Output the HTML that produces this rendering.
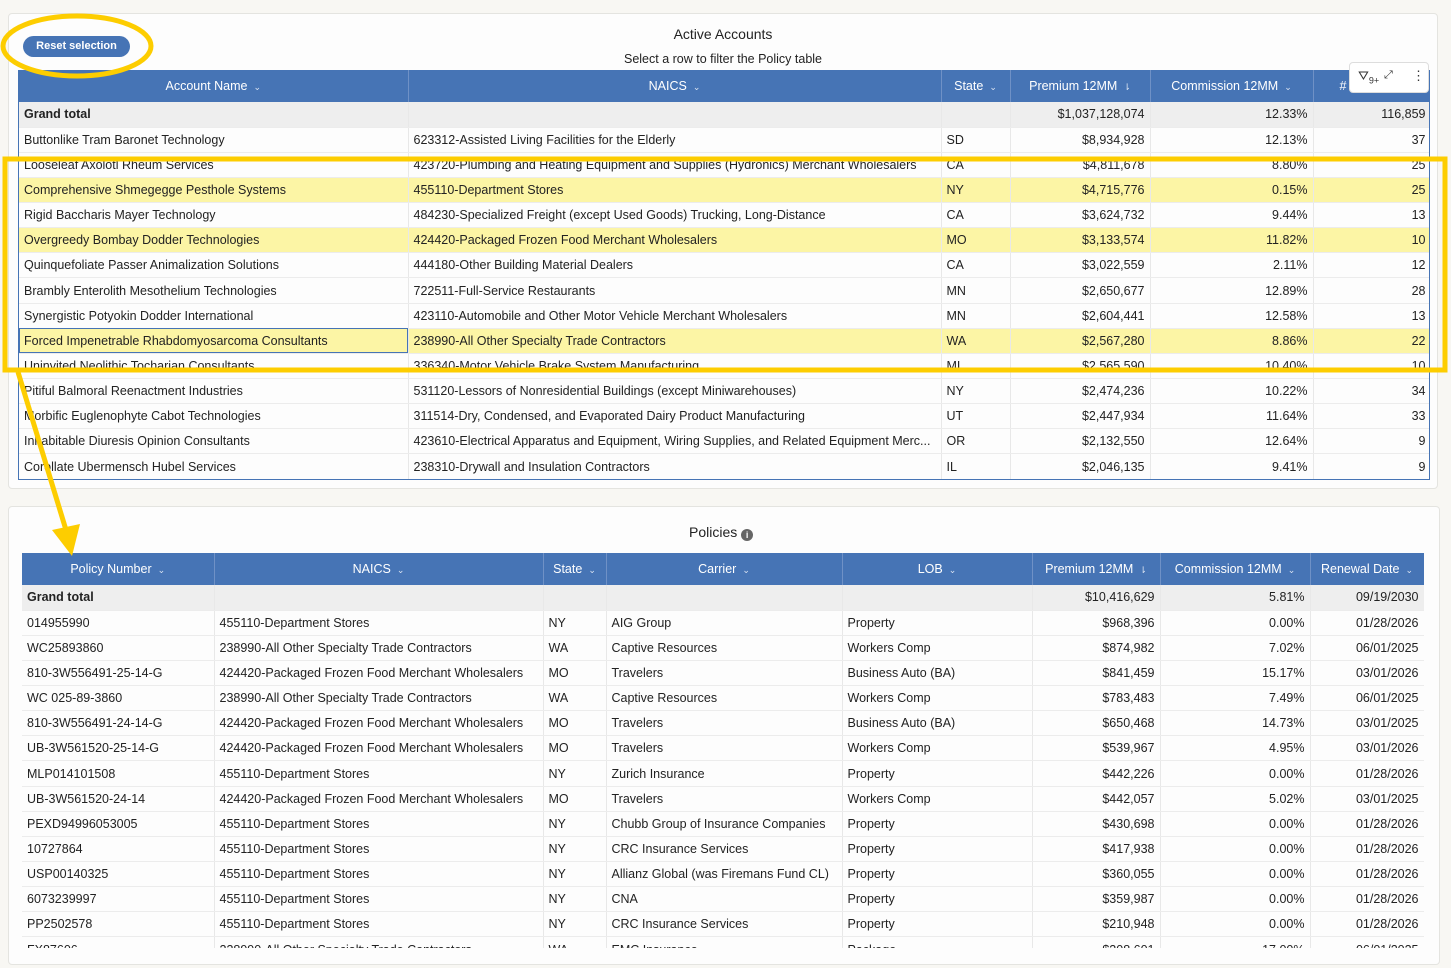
<!DOCTYPE html>
<html><head><meta charset="utf-8"><style>
*{box-sizing:border-box;margin:0;padding:0}
body{width:1451px;height:968px;background:#f8f7f3;font-family:"Liberation Sans",sans-serif;font-size:12.5px;color:#222;position:relative;overflow:hidden}
.card{position:absolute;background:#fdfdfd;border:1px solid #e4e4e0;border-radius:4px}
table{border-collapse:collapse;table-layout:fixed;position:absolute}
td{height:25.15px;padding:0 5px;white-space:nowrap;overflow:hidden;border-bottom:1px solid #ececec;border-right:1px solid #e8e8e8;line-height:24px}
th{height:32px;background:#4674b5;color:#fff;font-weight:normal;font-size:12.5px;border-right:1px solid #6f91c6;white-space:nowrap;overflow:hidden}
th .c{font-size:9px;color:#dde5f2;margin-left:6px}
.r{text-align:right}
tr.g td{background:#eeeeee;font-weight:bold}
tr.g td:not(:first-child){font-weight:normal}
tr.h td{background:#fcf5a5}
.wrap{position:absolute;overflow:hidden}
</style></head><body>
<div class="card" style="left:8px;top:13px;width:1430px;height:476px"></div>
<div style="position:absolute;left:23px;top:36px;width:107px;height:21px;background:#4674b5;border-radius:11px;color:#fff;font-size:11px;font-weight:bold;text-align:center;line-height:21px">Reset selection</div>
<div style="position:absolute;left:0;top:26px;width:1446px;text-align:center;font-size:14px;color:#222">Active Accounts</div>
<div style="position:absolute;left:0;top:52px;width:1446px;text-align:center;font-size:12.5px;color:#222">Select a row to filter the Policy table</div>
<div class="wrap" style="left:18px;top:70px;width:1412px;height:410px;border:1px solid #4674b5;border-top:none">
<table style="left:0;top:0;width:1412px">
<colgroup><col style="width:389px"><col style="width:533px"><col style="width:69px"><col style="width:140px"><col style="width:163px"><col style="width:118px"></colgroup>
<tr><th>Account Name<span class="c">⌄</span></th><th>NAICS<span class="c">⌄</span></th><th>State<span class="c">⌄</span></th><th>Premium 12MM<span class="c">⇂</span></th><th>Commission 12MM<span class="c">⌄</span></th><th style="text-align:left;padding-left:26px"># o</th></tr>
<tr class="g"><td>Grand total</td><td></td><td></td><td class="r">$1,037,128,074</td><td class="r">12.33%</td><td class="r">116,859</td></tr>
<tr><td>Buttonlike Tram Baronet Technology</td><td>623312-Assisted Living Facilities for the Elderly</td><td>SD</td><td class="r">$8,934,928</td><td class="r">12.13%</td><td class="r">37</td></tr>
<tr><td>Looseleaf Axolotl Rheum Services</td><td>423720-Plumbing and Heating Equipment and Supplies (Hydronics) Merchant Wholesalers</td><td>CA</td><td class="r">$4,811,678</td><td class="r">8.80%</td><td class="r">25</td></tr>
<tr class="h"><td>Comprehensive Shmegegge Pesthole Systems</td><td>455110-Department Stores</td><td>NY</td><td class="r">$4,715,776</td><td class="r">0.15%</td><td class="r">25</td></tr>
<tr><td>Rigid Baccharis Mayer Technology</td><td>484230-Specialized Freight (except Used Goods) Trucking, Long-Distance</td><td>CA</td><td class="r">$3,624,732</td><td class="r">9.44%</td><td class="r">13</td></tr>
<tr class="h"><td>Overgreedy Bombay Dodder Technologies</td><td>424420-Packaged Frozen Food Merchant Wholesalers</td><td>MO</td><td class="r">$3,133,574</td><td class="r">11.82%</td><td class="r">10</td></tr>
<tr><td>Quinquefoliate Passer Animalization Solutions</td><td>444180-Other Building Material Dealers</td><td>CA</td><td class="r">$3,022,559</td><td class="r">2.11%</td><td class="r">12</td></tr>
<tr><td>Brambly Enterolith Mesothelium Technologies</td><td>722511-Full-Service Restaurants</td><td>MN</td><td class="r">$2,650,677</td><td class="r">12.89%</td><td class="r">28</td></tr>
<tr><td>Synergistic Potyokin Dodder International</td><td>423110-Automobile and Other Motor Vehicle Merchant Wholesalers</td><td>MN</td><td class="r">$2,604,441</td><td class="r">12.58%</td><td class="r">13</td></tr>
<tr class="h"><td style="outline:1px solid #4674b5;outline-offset:-1px">Forced Impenetrable Rhabdomyosarcoma Consultants</td><td>238990-All Other Specialty Trade Contractors</td><td>WA</td><td class="r">$2,567,280</td><td class="r">8.86%</td><td class="r">22</td></tr>
<tr><td>Uninvited Neolithic Tocharian Consultants</td><td>336340-Motor Vehicle Brake System Manufacturing</td><td>MI</td><td class="r">$2,565,590</td><td class="r">10.40%</td><td class="r">10</td></tr>
<tr><td>Pitiful Balmoral Reenactment Industries</td><td>531120-Lessors of Nonresidential Buildings (except Miniwarehouses)</td><td>NY</td><td class="r">$2,474,236</td><td class="r">10.22%</td><td class="r">34</td></tr>
<tr><td>Morbific Euglenophyte Cabot Technologies</td><td>311514-Dry, Condensed, and Evaporated Dairy Product Manufacturing</td><td>UT</td><td class="r">$2,447,934</td><td class="r">11.64%</td><td class="r">33</td></tr>
<tr><td>Inhabitable Diuresis Opinion Consultants</td><td>423610-Electrical Apparatus and Equipment, Wiring Supplies, and Related Equipment Merc...</td><td>OR</td><td class="r">$2,132,550</td><td class="r">12.64%</td><td class="r">9</td></tr>
<tr><td>Corollate Ubermensch Hubel Services</td><td>238310-Drywall and Insulation Contractors</td><td>IL</td><td class="r">$2,046,135</td><td class="r">9.41%</td><td class="r">9</td></tr>
</table></div>
<div style="position:absolute;left:1349px;top:62px;width:80px;height:31px;background:#fff;border:1px solid #ddd;border-radius:4px;font-size:13px;color:#333">
<span style="position:absolute;left:8px;top:5px">⛛<sub style="font-size:9px">9+</sub></span><span style="position:absolute;left:34px;top:6px;font-size:11px">⤢</span><span style="position:absolute;left:62px;top:5px">⋮</span></div>

<div class="card" style="left:8px;top:506px;width:1432px;height:459px"></div>
<div style="position:absolute;left:689px;top:524px;font-size:14px">Policies <span style="display:inline-block;width:12px;height:12px;border-radius:6px;background:#666;color:#fff;font-size:9px;text-align:center;line-height:12px;font-weight:bold;vertical-align:-1px">i</span></div>
<div class="wrap" style="left:22px;top:553px;width:1402px;height:395px">
<table style="left:0;top:0;width:1402px">
<colgroup><col style="width:192px"><col style="width:329px"><col style="width:63px"><col style="width:236px"><col style="width:190px"><col style="width:128px"><col style="width:150px"><col style="width:114px"></colgroup>
<tr><th>Policy Number<span class="c">⌄</span></th><th>NAICS<span class="c">⌄</span></th><th>State<span class="c">⌄</span></th><th>Carrier<span class="c">⌄</span></th><th>LOB<span class="c">⌄</span></th><th>Premium 12MM<span class="c">⇂</span></th><th>Commission 12MM<span class="c">⌄</span></th><th>Renewal Date<span class="c">⌄</span></th></tr>
<tr class="g"><td>Grand total</td><td></td><td></td><td></td><td></td><td class="r">$10,416,629</td><td class="r">5.81%</td><td class="r">09/19/2030</td></tr>
<tr><td>014955990</td><td>455110-Department Stores</td><td>NY</td><td>AIG Group</td><td>Property</td><td class="r">$968,396</td><td class="r">0.00%</td><td class="r">01/28/2026</td></tr>
<tr><td>WC25893860</td><td>238990-All Other Specialty Trade Contractors</td><td>WA</td><td>Captive Resources</td><td>Workers Comp</td><td class="r">$874,982</td><td class="r">7.02%</td><td class="r">06/01/2025</td></tr>
<tr><td>810-3W556491-25-14-G</td><td>424420-Packaged Frozen Food Merchant Wholesalers</td><td>MO</td><td>Travelers</td><td>Business Auto (BA)</td><td class="r">$841,459</td><td class="r">15.17%</td><td class="r">03/01/2026</td></tr>
<tr><td>WC 025-89-3860</td><td>238990-All Other Specialty Trade Contractors</td><td>WA</td><td>Captive Resources</td><td>Workers Comp</td><td class="r">$783,483</td><td class="r">7.49%</td><td class="r">06/01/2025</td></tr>
<tr><td>810-3W556491-24-14-G</td><td>424420-Packaged Frozen Food Merchant Wholesalers</td><td>MO</td><td>Travelers</td><td>Business Auto (BA)</td><td class="r">$650,468</td><td class="r">14.73%</td><td class="r">03/01/2025</td></tr>
<tr><td>UB-3W561520-25-14-G</td><td>424420-Packaged Frozen Food Merchant Wholesalers</td><td>MO</td><td>Travelers</td><td>Workers Comp</td><td class="r">$539,967</td><td class="r">4.95%</td><td class="r">03/01/2026</td></tr>
<tr><td>MLP014101508</td><td>455110-Department Stores</td><td>NY</td><td>Zurich Insurance</td><td>Property</td><td class="r">$442,226</td><td class="r">0.00%</td><td class="r">01/28/2026</td></tr>
<tr><td>UB-3W561520-24-14</td><td>424420-Packaged Frozen Food Merchant Wholesalers</td><td>MO</td><td>Travelers</td><td>Workers Comp</td><td class="r">$442,057</td><td class="r">5.02%</td><td class="r">03/01/2025</td></tr>
<tr><td>PEXD94996053005</td><td>455110-Department Stores</td><td>NY</td><td>Chubb Group of Insurance Companies</td><td>Property</td><td class="r">$430,698</td><td class="r">0.00%</td><td class="r">01/28/2026</td></tr>
<tr><td>10727864</td><td>455110-Department Stores</td><td>NY</td><td>CRC Insurance Services</td><td>Property</td><td class="r">$417,938</td><td class="r">0.00%</td><td class="r">01/28/2026</td></tr>
<tr><td>USP00140325</td><td>455110-Department Stores</td><td>NY</td><td>Allianz Global (was Firemans Fund CL)</td><td>Property</td><td class="r">$360,055</td><td class="r">0.00%</td><td class="r">01/28/2026</td></tr>
<tr><td>6073239997</td><td>455110-Department Stores</td><td>NY</td><td>CNA</td><td>Property</td><td class="r">$359,987</td><td class="r">0.00%</td><td class="r">01/28/2026</td></tr>
<tr><td>PP2502578</td><td>455110-Department Stores</td><td>NY</td><td>CRC Insurance Services</td><td>Property</td><td class="r">$210,948</td><td class="r">0.00%</td><td class="r">01/28/2026</td></tr>
<tr><td>FX87606</td><td>238990-All Other Specialty Trade Contractors</td><td>WA</td><td>EMC Insurance</td><td>Package</td><td class="r">$208,601</td><td class="r">17.00%</td><td class="r">06/01/2025</td></tr>
</table></div>

<svg style="position:absolute;left:0;top:0" width="1451" height="968">
<g fill="none" stroke="#fdcd00" stroke-width="5">
<ellipse cx="77" cy="46" rx="74" ry="30"/>
<rect x="5" y="159" width="1440" height="211"/>
<line x1="18" y1="372" x2="66" y2="530"/>
</g>
<polygon points="52,530 80,524 72,556" fill="#fdcd00"/>
</svg>
</body></html>
